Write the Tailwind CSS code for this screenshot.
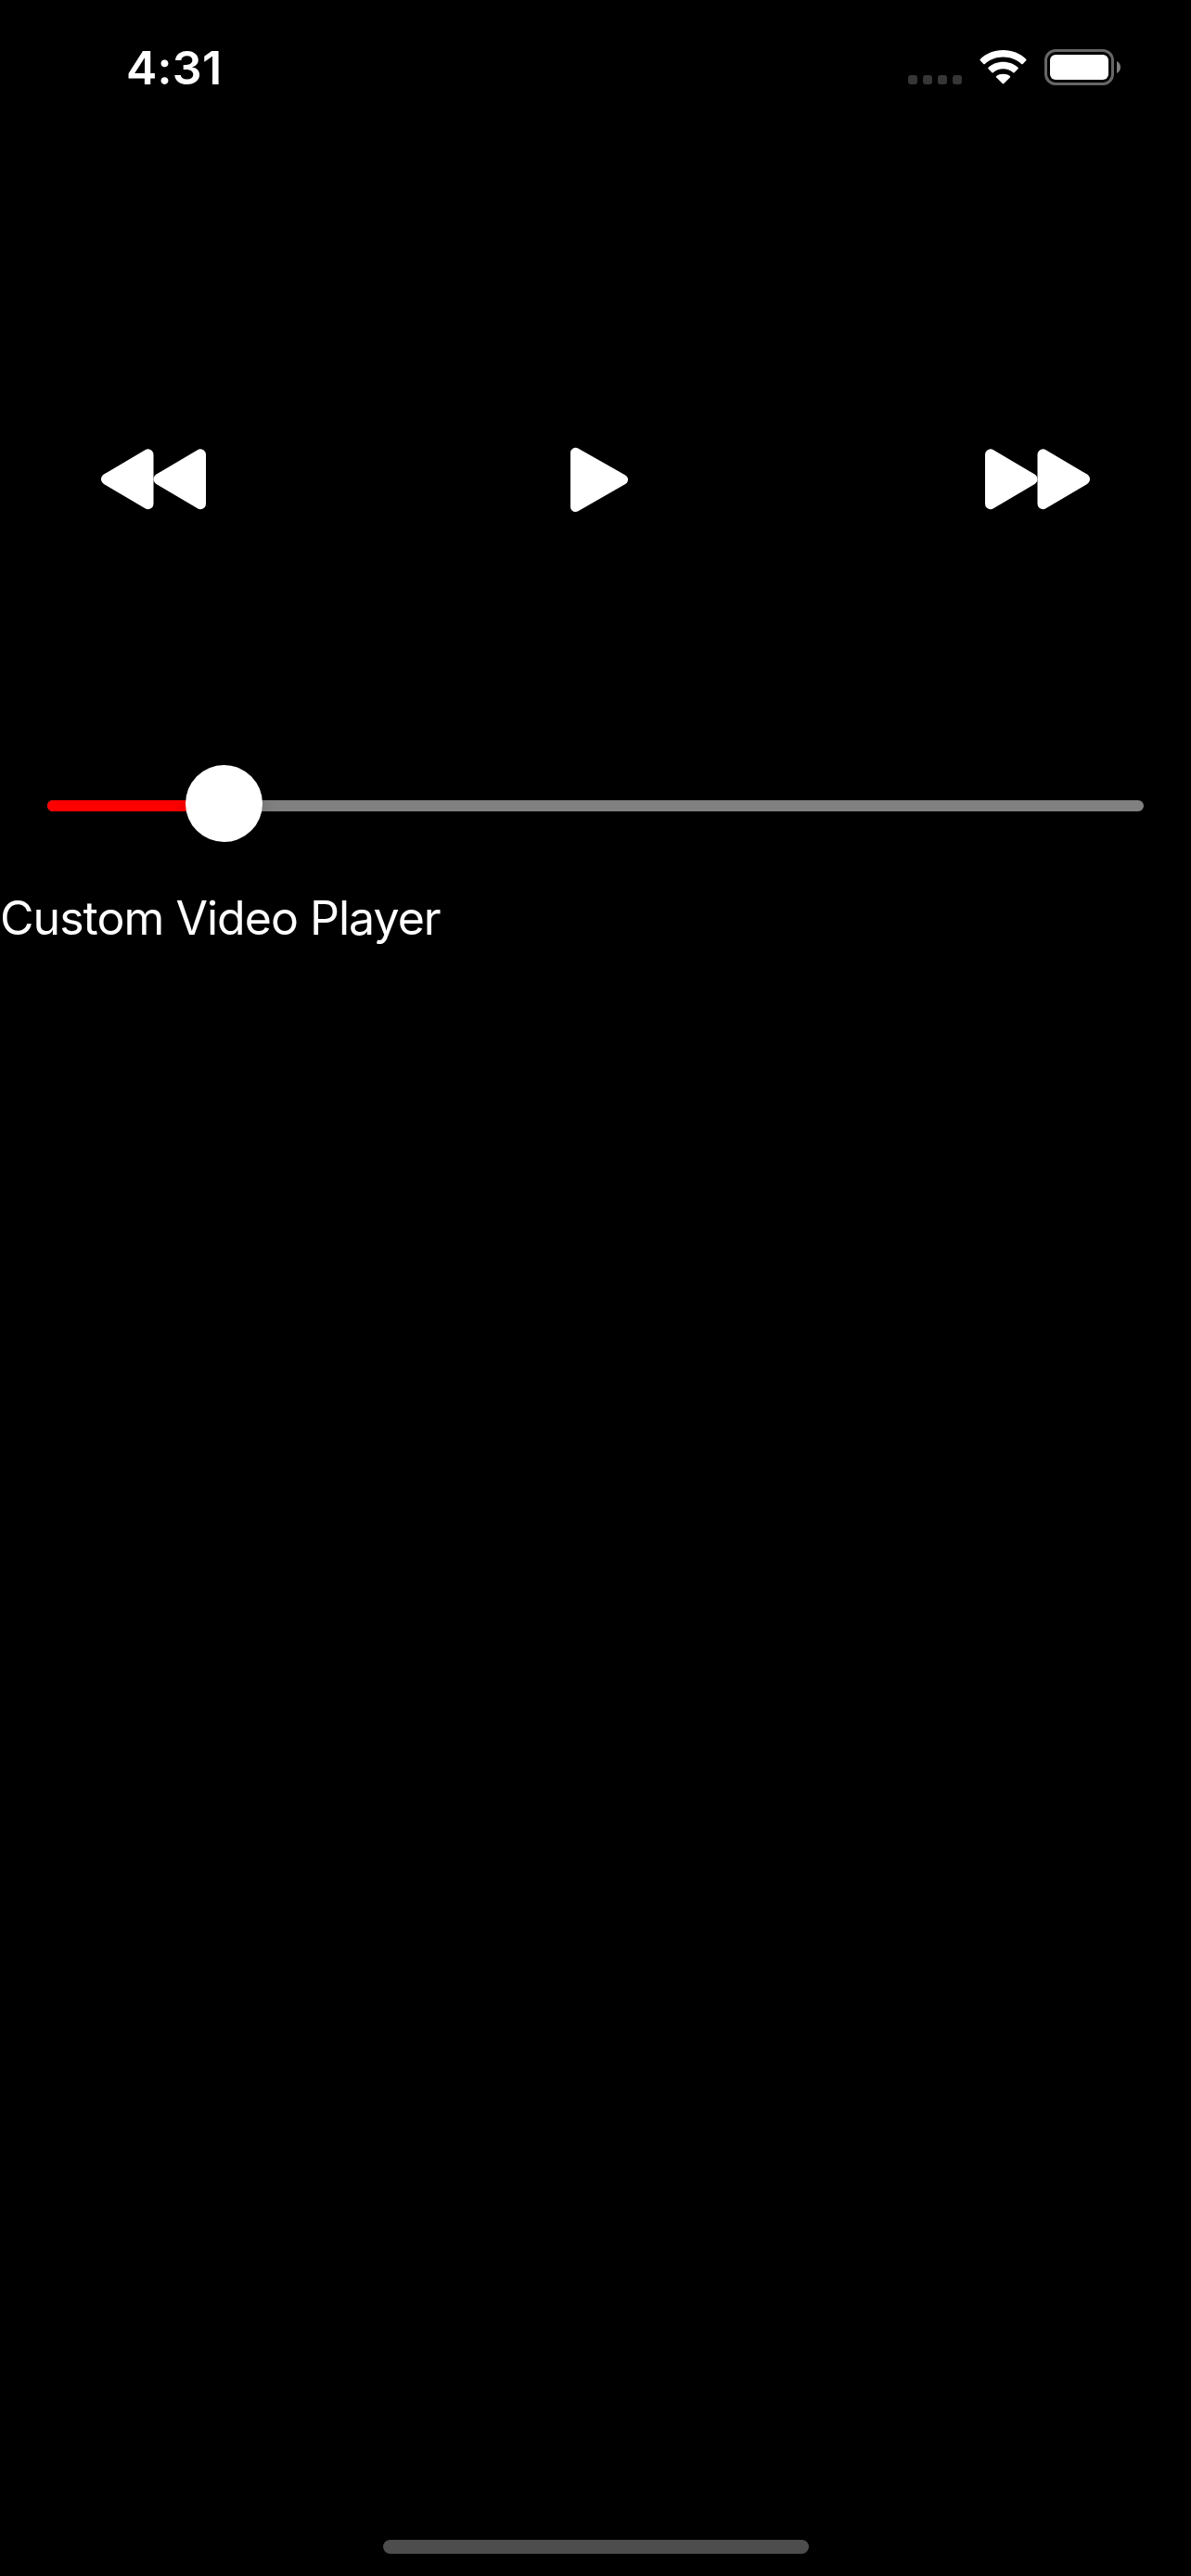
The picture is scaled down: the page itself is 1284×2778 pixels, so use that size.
<!DOCTYPE html>
<html lang="en">
<head>
<meta charset="utf-8">
<title>Custom Video Player</title>
<script src="https://cdn.jsdelivr.net/npm/@tailwindcss/browser@4"></script>
</head>
<body class="bg-black">
<div class="flex h-[2778px] w-[1284px] flex-col overflow-hidden bg-black font-['Inter',sans-serif] text-white">
  <header class="flex h-[141px] shrink-0 items-start justify-between pt-[43px] pr-[76px] pl-[136px]">
    <time class="text-[50px] leading-[60px] font-semibold tracking-[0.3px]">4:31</time>
    <div class="flex items-start pt-[10px]">
      <div class="mt-7 mr-[19px] flex gap-[6px]">
        <span class="size-[10px] rounded-[3px] bg-[#363636]"></span>
        <span class="size-[10px] rounded-[3px] bg-[#363636]"></span>
        <span class="size-[10px] rounded-[3px] bg-[#363636]"></span>
        <span class="size-[10px] rounded-[3px] bg-[#363636]"></span>
      </div>
      <svg class="mt-px mr-[19px]" width="51" height="37" viewBox="0 0 51 37" fill="white">
        <path d="M25.5 0C35.200 0 43.800 3.600 50.200 9.700Q51 10.500 50.200 11.300L46.700 14.900Q46 15.600 45.200 14.900C40 10.200 33 7.500 25.500 7.500S11 10.200 5.800 14.900Q5 15.600 4.300 14.900L.8 11.300Q0 10.500 .8 9.700C7.200 3.600 15.800 0 25.500 0Z"/>
        <path d="M25.500 12.700C31.800 12.700 37.400 15 41.500 18.700Q42.300 19.500 41.500 20.300L37.600 24.200Q37 24.800 36.200 24.200C33.300 21.700 29.600 20.300 25.500 20.300S17.700 21.700 14.800 24.200Q14 24.800 13.400 24.200L9.500 20.300Q8.700 19.500 9.500 18.700C13.600 15 19.200 12.700 25.500 12.700Z"/>
        <path d="M25.500 25.700C28.300 25.700 30.900 26.500 32.800 28Q33.700 28.700 32.900 29.500L26.300 36.100Q25.500 36.900 24.700 36.100L18.100 29.500Q17.300 28.700 18.200 28C20.100 26.500 22.700 25.700 25.500 25.700Z"/>
      </svg>
      <svg width="82" height="39" viewBox="0 0 82 39">
        <rect x="1.500" y="1.500" width="72" height="36" rx="10.500" fill="none" stroke="#666" stroke-width="3"/>
        <rect x="6" y="6" width="63" height="27" rx="6" fill="white"/>
        <path d="M78 13C80.700 14.300 82 16.800 82 19.500S80.700 24.700 78 26Z" fill="#808080"/>
      </svg>
    </div>
  </header>

  <main class="flex flex-col">
    <div class="flex h-[684px] items-start justify-between pt-[341px] pr-[109px] pl-[109px]">
      <button aria-label="Rewind">
        <svg class="block" width="113" height="70" viewBox="0 0 113 70" fill="white" stroke="white" stroke-width="12" stroke-linejoin="round">
          <path d="M50.500 8.300V61.200L6 34.750Z"/>
          <path d="M107 8.300V61.200L62.500 34.750Z"/>
        </svg>
      </button>
      <button class="ml-[7px]" aria-label="Play">
        <svg class="block" width="62" height="70" viewBox="0 0 62 70" fill="white" stroke="white" stroke-width="11" stroke-linejoin="round">
          <path d="M5.500 6.300V64.500L56.500 35.200Z"/>
        </svg>
      </button>
      <button aria-label="Fast forward">
        <svg class="block" width="113" height="70" viewBox="0 0 113 70" fill="white" stroke="white" stroke-width="12" stroke-linejoin="round">
          <path d="M6 8.300V61.200L50.500 34.750Z"/>
          <path d="M62.500 8.300V61.200L107 34.750Z"/>
        </svg>
      </button>
    </div>

    <div class="relative mx-[51px] flex h-[83px] items-start pt-[38px]">
      <div class="h-3 w-full overflow-hidden rounded-full bg-[#808080]">
        <div class="h-full bg-[#ff0000]" style="width:190px"></div>
      </div>
      <div class="absolute top-0 left-[149px] size-[83px] rounded-full bg-white shadow-[0_2px_18px_rgba(0,0,0,0.15)]"></div>
    </div>

    <h1 class="mt-[52px] text-[50px] leading-[60px] font-normal tracking-[-0.97px] whitespace-nowrap">Custom Video Player</h1>
  </main>

  <footer class="mt-auto flex justify-center pr-0 pb-6 pl-px">
    <div class="h-[15px] w-[459px] rounded-full bg-[#4d4d4d]"></div>
  </footer>
</div>
</body>
</html>
